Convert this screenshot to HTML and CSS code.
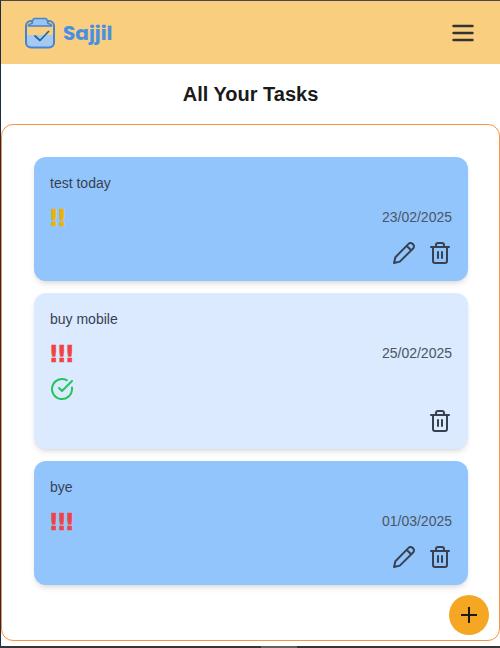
FILE: index.html
```html
<!DOCTYPE html>
<html lang="en">
<head>
<meta charset="utf-8">
<title>Sajjil</title>
<link rel="stylesheet" href="styles.css">
</head>
<body>
<svg class="sprite" aria-hidden="true">
  <symbol id="pencil" viewBox="0 0 24 24"><path d="M16.500 2.900a2.800 2.800 0 0 1 4-.1l.7.700a2.800 2.800 0 0 1-.1 4L7.800 20.600L2 22l1.400-5.800zM14.800 5l4.300 4.300"/></symbol>
  <symbol id="trash" viewBox="0 0 24 24"><path d="M3 6h18M19 6v14a2 2 0 0 1-2 2H7a2 2 0 0 1-2-2V6M8 6V4a2 2 0 0 1 2-2h4a2 2 0 0 1 2 2v2M10 11v6M14 11v6"/></symbol>
</svg>
<div class="window">
  <header class="header">
    <div class="brand">
      <svg class="logo" viewBox="0 0 32 32">
        <path class="logo-fill" d="M3 18H29V26Q29 31 24 31H8Q3 31 3 26Z"/>
        <rect class="logo-line" x="2" y="4" width="28" height="26.500" rx="5"/>
        <path class="logo-clip" d="M4.500 9Q4.500 7 8 6.500Q8.500 1.500 11 1.500H21Q23.500 1.500 24 6.500Q27.500 7 27.500 9Z"/>
        <path class="logo-check" d="M11 19L16 23.500L24.500 14.500"/>
      </svg>
      <span class="brand-name">Sajjil</span>
    </div>
    <svg class="menu" viewBox="0 0 24 24"><path d="M2.500 5h19M2.500 12h19M2.500 19h19"/></svg>
  </header>
  <h1 class="title">All Your Tasks</h1>
  <main class="panel">
    <article class="card">
      <p class="name">test today</p>
      <div class="row"><span class="priority medium">!!</span><time>23/02/2025</time></div>
      <div class="actions"><svg class="icon"><use href="#pencil"/></svg><svg class="icon"><use href="#trash"/></svg></div>
    </article>
    <article class="card done">
      <p class="name">buy mobile</p>
      <div class="row"><span class="priority high">!!!</span><time>25/02/2025</time></div>
      <svg class="icon check" viewBox="0 0 24 24"><path d="M22 10.500V12a10 10 0 1 1-5.300-8.800M9 11l3 3L22 4"/></svg>
      <div class="actions"><svg class="icon"><use href="#trash"/></svg></div>
    </article>
    <article class="card">
      <p class="name">bye</p>
      <div class="row"><span class="priority high">!!!</span><time>01/03/2025</time></div>
      <div class="actions"><svg class="icon"><use href="#pencil"/></svg><svg class="icon"><use href="#trash"/></svg></div>
    </article>
    <button class="add" aria-label="Add task"><svg viewBox="0 0 24 24"><path d="M4 12h16M12 4v16"/></svg></button>
  </main>
</div>
<div class="edge"><div class="edge-light"></div></div>
</body>
</html>
```

FILE: styles.css
```css
* { box-sizing: border-box; }
body {
  margin: 0;
  height: 648px;
  overflow: hidden;
  background: #fff;
  font-family: "Liberation Sans", Arial, sans-serif;
}
.sprite { display: none; }
.window {
  height: 646px;
  border-top: 1px solid #4b474d;
  border-left: 1px solid #1e2b48;
}
.header {
  height: 63px;
  padding: 0 25px 0 23px;
  background: #face7f;
  display: flex;
  align-items: center;
  justify-content: space-between;
}
.brand { display: flex; align-items: center; gap: 7px; }
.logo { width: 32px; height: 32px; fill: none; stroke-linecap: round; stroke-linejoin: round; }
.logo-fill { fill: #a5c9f3; }
.logo-line { stroke: #4685cd; stroke-width: 2; }
.logo-clip { fill: #9cc4f1; stroke: #4685cd; stroke-width: 1.7; }
.logo-check { stroke: #25639c; stroke-width: 1.7; }
.brand-name {
  font-family: Poppins, "Open Sans", sans-serif;
  font-size: 20px;
  font-weight: 700;
  line-height: 28px;
  color: #4a90e2;
}
.menu { width: 24px; height: 24px; fill: none; stroke: #333; stroke-width: 2.4; stroke-linecap: round; }
.title {
  margin: 0;
  height: 60px;
  font-size: 20px;
  line-height: 60px;
  text-align: center;
  color: #1a1a1a;
}
.panel {
  position: relative;
  height: 517px;
  padding: 32px;
  border: 1px solid #fb923c;
  border-radius: 12px;
  display: flex;
  flex-direction: column;
  gap: 12px;
}
.card {
  width: 434px;
  padding: 16px;
  border-radius: 12px;
  background: #93c5fd;
  box-shadow: 0 4px 6px -1px rgba(0, 0, 0, .1), 0 2px 4px -2px rgba(0, 0, 0, .1);
  display: flex;
  flex-direction: column;
  gap: 8px;
  color: #374151;
}
.done { background: #dbeafe; }
.name { margin: 0; font-size: 14px; line-height: 20px; }
.row { height: 32px; display: flex; align-items: center; justify-content: space-between; }
.priority {
  margin: 2px 0 0 -1.5px;
  font-family: "DejaVu Sans", sans-serif;
  font-size: 23px;
  font-weight: 700;
  line-height: 32px;
  letter-spacing: -2.49px;
  -webkit-text-stroke: .5px currentColor;
}
.medium { color: #eab308; }
.high { color: #ef4444; }
time { font-size: 14px; line-height: 20px; color: #4b5563; }
.actions { display: flex; justify-content: flex-end; gap: 12px; }
.icon {
  display: block;
  width: 24px;
  height: 24px;
  fill: none;
  stroke: currentColor;
  stroke-width: 2;
  stroke-linecap: round;
  stroke-linejoin: round;
}
.check { color: #22c55e; }
.add {
  position: absolute;
  right: 10px;
  bottom: 5px;
  width: 40px;
  height: 40px;
  padding: 0;
  border: 0;
  border-radius: 50%;
  background: #f5a623;
  display: flex;
  align-items: center;
  justify-content: center;
}
.add svg { width: 24px; height: 24px; stroke: #1a1a1a; stroke-width: 2; }
.edge { height: 2px; padding-left: 261px; background: #363435; }
.edge-light { width: 36px; height: 2px; background: #626262; }
```
